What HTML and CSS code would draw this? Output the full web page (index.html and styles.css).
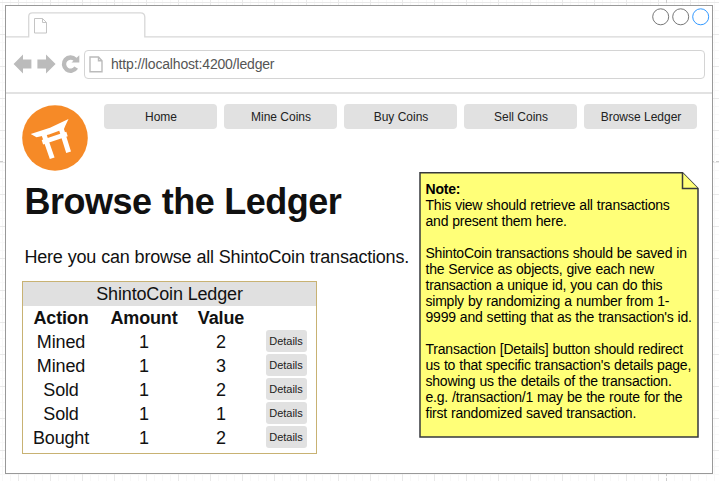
FILE: index.html
```html
<!DOCTYPE html>
<html lang="en">
<head>
<meta charset="utf-8">
<title>ShintoCoin Ledger</title>
<link rel="stylesheet" href="styles.css">
</head>
<body>
<div class="guide guide-h"></div>
<div class="guide guide-v"></div>
<div class="window">
  <header class="tabs">
    <svg width="708" height="33" viewBox="0 0 708 33" fill="none">
      <path d="M0 31.8H23.7V11.5Q23.7 7.8 27.5 7.8H135.5Q139.8 7.8 139.8 12V31.8H708" stroke="#d8d8d8" stroke-width="1.3"/>
      <path d="M29.5 13.5H37.5L41.5 17.5V28H29.5ZM37.5 13.5V17.5H41.5" stroke="#c4c4c4"/>
      <circle cx="655.7" cy="11.8" r="8" stroke="#777"/>
      <circle cx="675.7" cy="11.8" r="8" stroke="#777"/>
      <circle cx="695.7" cy="11.8" r="8" stroke="#3399ff"/>
    </svg>
  </header>
  <div class="toolbar">
    <svg class="arrows" width="70" height="22" viewBox="0 0 70 22" fill="#bbb">
      <path d="M.6 11L10 1.5V6.5H18.4V15.5H10V20.5Z"/>
      <path d="M42.6 11L33 1.5V6.5H24.4V15.5H33V20.5Z"/>
      <path d="M63.2 14.6A6.6 6.6 0 1 1 62.3 6.5" fill="none" stroke="#bbb" stroke-width="4.4"/>
      <path d="M66.3 2.2V9.5H58.5Z"/>
    </svg>
    <div class="url">
      <svg width="14" height="17" viewBox="0 0 14 17" fill="none" stroke="#bbb" stroke-width="1.4"><path d="M1 1H9.5L13 4.7V15.7H1ZM9.5 1V4.7H13"/></svg>
      <span>http://localhost:4200/ledger</span>
    </div>
  </div>
  <div class="page">
    <div class="top">
      <svg width="66" height="66" viewBox="0 0 66 66">
        <circle cx="33" cy="33" r="32.8" fill="#f68a27"/>
        <path fill="#fff" d="M8.7 29L28 22.7L46.5 14L43.2 21L42 24L27 29.4L14.5 32.2Z"/>
        <path fill="none" stroke="#fff" stroke-width="5" d="M21.8 29L30.2 53.3M38.7 22L46.6 47.3"/>
        <path fill="none" stroke="#fff" stroke-width="4.6" d="M20.4 37.2L45 29"/>
      </svg>
      <nav><a>Home</a><a>Mine Coins</a><a>Buy Coins</a><a>Sell Coins</a><a>Browse Ledger</a></nav>
    </div>
    <div class="columns">
      <main>
        <h1>Browse the Ledger</h1>
        <p class="intro">Here you can browse all ShintoCoin transactions.</p>
        <section class="ledger">
          <div class="caption">ShintoCoin Ledger</div>
          <div class="row head"><span>Action</span><span>Amount</span><span>Value</span></div>
          <div class="row"><span>Mined</span><span>1</span><span>2</span><button>Details</button></div>
          <div class="row"><span>Mined</span><span>1</span><span>3</span><button>Details</button></div>
          <div class="row"><span>Sold</span><span>1</span><span>2</span><button>Details</button></div>
          <div class="row"><span>Sold</span><span>1</span><span>1</span><button>Details</button></div>
          <div class="row"><span>Bought</span><span>1</span><span>2</span><button>Details</button></div>
        </section>
      </main>
      <aside class="note">
        <svg class="sheet" width="280" height="267" viewBox="0 0 280 267" fill="#ffff78" stroke="#36393d" stroke-width="1.5"><path d="M1 .8H263.5L279 16.5V265H1Z"/><path d="M263.5 .8V16.5H279"/></svg>
        <div class="note-text"><b>Note:</b><br>
        This view should retrieve all transactions<br>and present them here.<br><br>
        ShintoCoin transactions should be saved in<br>the Service as objects, give each new<br>transaction a unique id, you can do this<br>simply by randomizing a number from 1-<br>9999 and setting that as the transaction's id.<br><br>
        Transaction [Details] button should redirect<br>us to that specific transaction's details page,<br>showing us the details of the transaction.<br>e.g. /transaction/1 may be the route for the<br>first randomized saved transaction.</div>
      </aside>
    </div>
  </div>
</div>
</body>
</html>
```
FILE: styles.css
```css
* { box-sizing: border-box; }
body {
  margin: 0;
  width: 719px;
  height: 481px;
  overflow: hidden;
  padding: 5px 0 0 5px;
  font-family: "Liberation Sans", Arial, sans-serif;
  color: #111;
  background-color: #fff;
  background-image:
    linear-gradient(90deg, #e9e9e9 1px, transparent 1px),
    linear-gradient(#e9e9e9 1px, transparent 1px),
    linear-gradient(90deg, #f8f8f8 1px, transparent 1px),
    linear-gradient(#f8f8f8 1px, transparent 1px);
  background-size: 32px 32px, 32px 32px, 8px 8px, 8px 8px;
  background-position: 18px 2px, 18px 2px, 2px 2px, 2px 2px;
}
.guide { position: absolute; }
.guide-h { left: 0; top: 161px; width: 719px; border-top: 1px dashed #ccc; }
.guide-v { left: 666px; top: 0; height: 481px; border-left: 1px dashed #ccc; }
.window {
  position: relative;
  width: 708px;
  height: 469px;
  background: #fff;
  outline: 1px solid #999;
  outline-offset: -1px;
}
.tabs { height: 33px; }
svg { display: block; flex: none; }
.toolbar {
  height: 56px;
  display: flex;
  align-items: center;
  padding: 0 7px 2px;
  border-bottom: 2px solid #e2e2e2;
}
.tabs { margin-right: 1px; overflow: hidden; }
.toolbar { margin: 0 1px; }
.url {
  flex: 1;
  height: 29px;
  border: 1px solid #d4d4d4;
  margin-left: 1px;
  border-radius: 4px;
  display: flex;
  align-items: center;
  gap: 8px;
  padding-left: 4px;
  font-size: 14px;
  letter-spacing: -0.17px;
  color: #555;
}
.page { padding: 11px 0 0 17px; }
.top { display: flex; gap: 16px; height: 67px; }
nav { display: flex; gap: 7px; margin-top: -1px; }
nav a {
  width: 113px;
  height: 25px;
  border-radius: 4px;
  background: #e1e1e1;
  font-size: 12px;
  line-height: 26px;
  text-align: center;
  color: #222;
  padding-left: 1px;
}
.columns { display: flex; align-items: flex-start; }
main { width: 397px; }
h1 { margin: 10px 0 0 2.6px; font-size: 36px; line-height: 40px; letter-spacing: -0.5px; word-spacing: 0.6px; white-space: nowrap; }
.intro { margin: 24px 0 13px 2.5px; font-size: 18px; line-height: 22px; white-space: nowrap; letter-spacing: -0.22px; word-spacing: 0.3px; }
.ledger { width: 295px; height: 173px; border: 1px solid #c8b273; font-size: 18px; line-height: 24px; letter-spacing: -0.15px; }
.caption { background: #e0e0e0; text-align: center; }
.row { display: grid; grid-template-columns: 76px 90px 64px 62px; height: 24px; text-align: center; }
.head { font-weight: bold; }
button {
  justify-self: center;
  align-self: center;
  margin: -3px 0 0 4px;
  width: 41px;
  height: 22px;
  padding: 0;
  border: 0;
  border-radius: 3px;
  background: #e1e1e1;
  color: #222;
  font: 11px "Liberation Sans", Arial, sans-serif;
}
.note { position: relative; width: 280px; height: 267px; }
.sheet { position: absolute; left: 0; top: 0; }
.note-text { position: relative; padding: 9px 0 0 6.5px; font-size: 14px; line-height: 16px; letter-spacing: -0.22px; word-spacing: 0.4px; color: #000; white-space: nowrap; }
```
